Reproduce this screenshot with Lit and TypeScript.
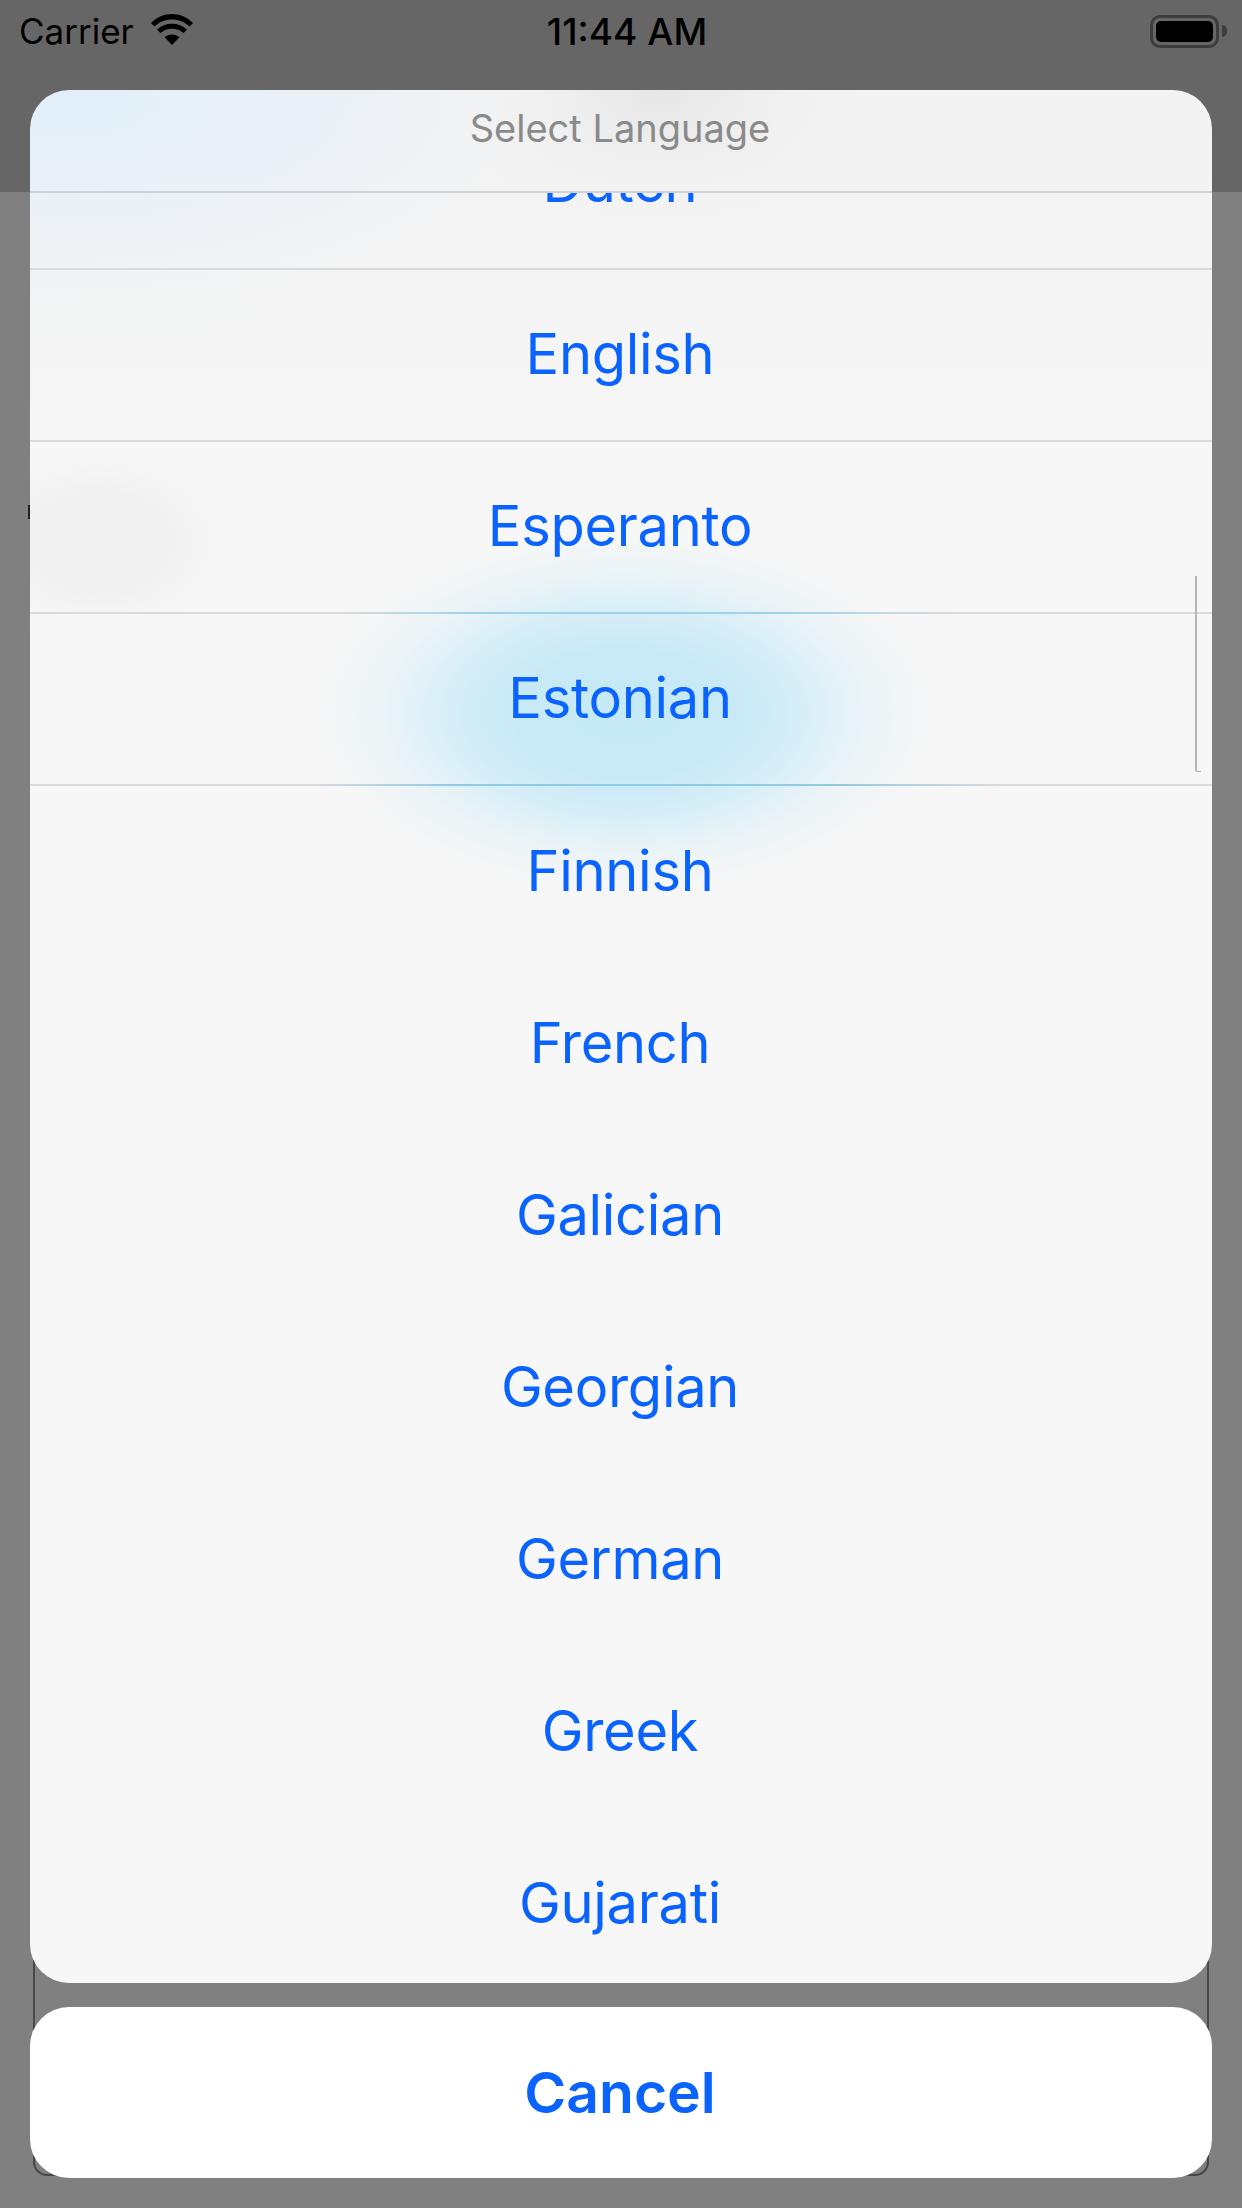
import { LitElement, css, html, svg } from 'lit'
import { customElement } from 'lit/decorators.js'
import { classMap } from 'lit/directives/class-map.js'

// visible rows, top to bottom; the first four still have their separators
const LANGUAGES = [
  'Dutch',
  'English',
  'Esperanto',
  'Estonian',
  'Finnish',
  'French',
  'Galician',
  'Georgian',
  'German',
  'Greek',
  'Gujarati',
]
const SEPARATED = 4

const wifiIcon = svg`
  <svg class="wifi" viewBox="0 0 42 31" width="42" height="31" aria-hidden="true">
    <path d="M21 31 L13.6 23.2 C17.8 19.6 24.2 19.6 28.4 23.2 Z" fill="#000" />
    <path d="M9.4 19 L6 15.4 C14.2 7.8 27.8 7.8 36 15.4 L32.6 19 C25.9 13.2 16.1 13.2 9.4 19 Z" fill="#000" />
    <path d="M3.4 12.6 L0 9 C11.6 -3 30.4 -3 42 9 L38.6 12.6 C28.9 3 13.1 3 3.4 12.6 Z" fill="#000" />
  </svg>
`

@customElement('app-root')
export class AppRoot extends LitElement {
  static styles = css`
    :host {
      display: block;
      position: relative;
      width: 1242px;
      height: 2208px;
      overflow: hidden;
      background: #808080;
      font-family: Inter, 'Liberation Sans', sans-serif;
    }
    .topbar {
      height: 192px;
      background: #666666;
      box-sizing: border-box;
      padding: 0 15px 0 19px;
    }
    .status {
      height: 62px;
      display: flex;
      align-items: center;
      justify-content: space-between;
      color: #000;
    }
    .status > div {
      flex: 1;
      display: flex;
      align-items: center;
    }
    .carrier {
      gap: 17px;
      font-size: 35px;
    }
    .wifi {
      display: block;
      margin-top: -3px;
    }
    .time {
      justify-content: center;
      font-size: 37px;
      font-weight: 500;
      padding-left: 8px;
    }
    .battery-wrap {
      justify-content: flex-end;
    }
    .battery {
      box-sizing: border-box;
      width: 69px;
      height: 33px;
      padding: 3px;
      border: 3px solid #3d3d3d;
      border-radius: 10px;
    }
    .battery i {
      display: block;
      height: 100%;
      background: #000;
      border-radius: 5px;
    }
    .nub {
      width: 5px;
      height: 12px;
      margin-left: 3px;
      background: #3d3d3d;
      border-radius: 0 6px 6px 0;
    }
    /* page content behind the sheet */
    .behind {
      position: absolute;
      left: 33px;
      width: 1176px;
      top: 1900px;
      height: 276px;
      box-sizing: border-box;
      border: 2px solid #484848;
      border-radius: 14px;
    }
    .mark {
      position: absolute;
      left: 28px;
      top: 505px;
      width: 2px;
      height: 14px;
      background: #222;
    }
    .overlay {
      position: absolute;
      left: 30px;
      top: 90px;
      width: 1182px;
      display: flex;
      flex-direction: column;
      gap: 24px;
    }
    .sheet {
      position: relative;
      height: 1893px;
      border-radius: 39px;
      overflow: hidden;
      background-color: #f7f7f7;
      background-image:
        radial-gradient(ellipse 310px 180px at 595px 623px, #c5e9f6 0%, #c8eaf6 36%, #d6eef7 56%, rgba(232, 243, 247, 0.8) 78%, rgba(247, 247, 247, 0) 100%),
        radial-gradient(ellipse 140px 100px at 70px 452px, #f0f0f0 0%, #f1f1f1 50%, rgba(245, 245, 245, 0.6) 78%, rgba(247, 247, 247, 0) 100%),
        radial-gradient(ellipse 210px 125px at 630px 5px, #e7e7e7 0%, rgba(240, 240, 240, 0.8) 60%, rgba(242, 242, 242, 0) 100%),
        radial-gradient(ellipse 620px 280px at 30px 0px, #e1eff9 0%, rgba(234, 240, 246, 0.9) 45%, rgba(243, 244, 245, 0.6) 75%, rgba(247, 247, 247, 0) 100%),
        linear-gradient(180deg, #f3f3f3 0px, #f4f4f4 200px, #f7f7f7 360px);
    }
    .title {
      height: 103px;
      box-sizing: border-box;
      border-bottom: 2px solid #cfd3d6;
      padding-top: 13px;
      padding-right: 2px;
      text-align: center;
      font-size: 38px;
      line-height: 50px;
      color: #8a8a8a;
    }
    .list {
      height: 1790px;
      overflow: hidden;
    }
    .rows {
      margin-top: -95px;
    }
    .row {
      height: 172px;
      box-sizing: border-box;
      padding: 0 2px 2px 0;
      display: flex;
      align-items: center;
      justify-content: center;
      font-size: 56px;
      letter-spacing: -0.3px;
      color: #0b63ff;
    }
    .row.sep {
      border-bottom: 2px solid #d8dadb;
    }
    .row.tint-soft {
      border-image: linear-gradient(90deg, #d8dadb 26%, #a0d2e7 38%, #a0d2e7 64%, #d8dadb 78%) 1;
    }
    .row.tint-strong {
      border-image: linear-gradient(90deg, #d8dadb 24%, #8fcbe4 36%, #8fcbe4 68%, #d8dadb 82%) 1;
    }
    .thumb {
      position: absolute;
      left: 1165px;
      top: 486px;
      width: 6px;
      height: 196px;
      box-sizing: border-box;
      border-left: 2px solid #b4b4b4;
      border-bottom: 1px solid #b4b4b4;
      border-bottom-left-radius: 2px;
    }
    .cancel {
      height: 171px;
      border-radius: 39px;
      background: #fff;
      display: flex;
      align-items: center;
      justify-content: center;
      padding-right: 2px;
      font-size: 57px;
      font-weight: 600;
      color: #0b63ff;
    }
  `

  render() {
    return html`
      <div class="topbar">
        <div class="status">
          <div class="carrier">Carrier ${wifiIcon}</div>
          <div class="time">11:44 AM</div>
          <div class="battery-wrap">
            <div class="battery"><i></i></div>
            <div class="nub"></div>
          </div>
        </div>
      </div>
      <div class="behind"></div>
      <div class="mark"></div>
      <div class="overlay">
        <div class="sheet">
          <div class="title">Select Language</div>
          <div class="list">
            <div class="rows">
              ${LANGUAGES.map(
                (name, i) =>
                  html`<div
                    class="row ${classMap({
                      sep: i < SEPARATED,
                      'tint-soft': i === 2,
                      'tint-strong': i === 3,
                    })}"
                  >
                    ${name}
                  </div>`,
              )}
            </div>
          </div>
          <div class="thumb"></div>
        </div>
        <div class="cancel">Cancel</div>
      </div>
    `
  }
}

declare global {
  interface HTMLElementTagNameMap {
    'app-root': AppRoot
  }
}
